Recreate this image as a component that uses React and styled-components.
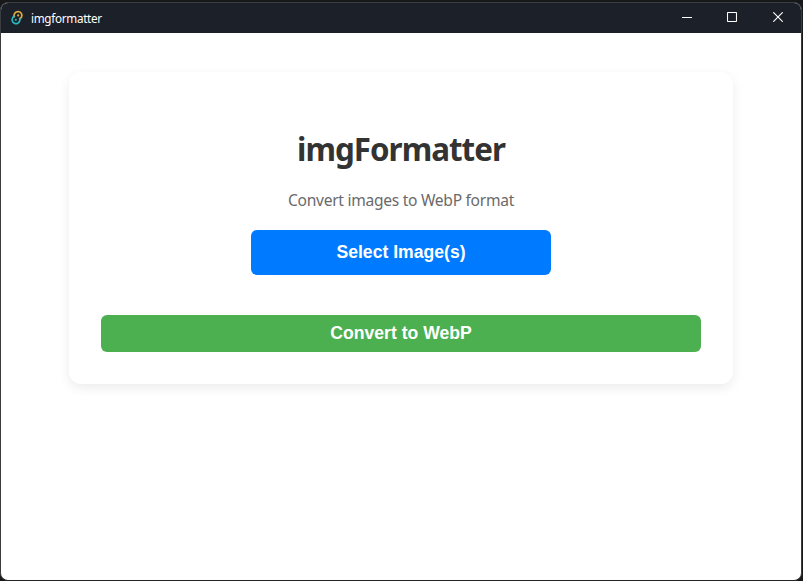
import React from "react";
import styled, { createGlobalStyle } from "styled-components";

const GlobalStyle = createGlobalStyle`
  * { box-sizing: border-box; }
  body { margin: 0; background: #161819; overflow: hidden; }
`;

const Desktop = styled.div`
  width: 803px;
  height: 581px;
  padding: 2px 1px 0 0;
  background: #161819;
`;

const Window = styled.div`
  display: flex;
  flex-direction: column;
  height: 579px;
  border: 1px solid #3a3d40;
  border-bottom-color: #222;
  border-radius: 8px;
  overflow: hidden;
  background: #fff;
`;

const TitleBar = styled.header`
  display: flex;
  align-items: center;
  flex: 0 0 30px;
  padding-left: 8px;
  background: #1c2029;
`;

const AppName = styled.span`
  flex: 1;
  margin-left: 6px;
  padding-bottom: 1px;
  color: #fff;
  font: 11.7px/16px "Noto Sans", "Open Sans", sans-serif;
  letter-spacing: -0.3px;
`;

const WindowButton = styled.button`
  display: flex;
  align-items: center;
  justify-content: center;
  width: ${({ $width }) => $width}px;
  height: 30px;
  padding: 0 0 2px;
  border: 0;
  background: transparent;
  color: #fff;
`;

const Content = styled.main`
  flex: 1;
  padding: 39px 68px 0;
`;

const Card = styled.section`
  display: flex;
  flex-direction: column;
  align-items: center;
  width: 664px;
  height: 312px;
  padding: 55px 32px 32px;
  border-radius: 12px;
  background: #fff;
  box-shadow: 0 4px 12px rgba(0, 0, 0, 0.08);
`;

const Heading = styled.h1`
  margin: 0;
  color: #333;
  font: 700 31.3px/44px "Noto Sans", "Open Sans", sans-serif;
  letter-spacing: -0.97px;
  white-space: nowrap;
`;

const Subtitle = styled.p`
  margin: 18px 0 19px;
  color: #6a6a6a;
  font: 400 15.6px/22px "Noto Sans", "Open Sans", sans-serif;
  letter-spacing: -0.29px;
  white-space: nowrap;
`;

const ActionButton = styled.button`
  flex: none;
  width: ${({ $wide }) => ($wide ? "600px" : "300px")};
  height: ${({ $wide }) => ($wide ? "37px" : "45px")};
  margin-top: ${({ $wide }) => ($wide ? "40px" : "0")};
  padding: 0 0 2px;
  border: 0;
  border-radius: 6px;
  background: ${({ $wide }) => ($wide ? "#4caf50" : "#007bff")};
  color: #fff;
  font: 700 17.6px/20px "Liberation Sans", Arial, sans-serif;
`;

function Logo() {
  return (
    <svg width="16" height="16" viewBox="0 0 16 16" fill="none">
      <path d="M5.6 7.4A3.9 3.9 0 1 1 10.4 9.1" stroke="#dfab3c" strokeWidth="1.7" />
      <path d="M10.4 7.8A3.9 3.9 0 1 1 5.6 6.1" stroke="#2bb5c0" strokeWidth="1.7" />
      <circle cx="9.2" cy="5.4" r="1.1" fill="#dfab3c" />
      <circle cx="6.8" cy="9.8" r="1.1" fill="#2bb5c0" />
    </svg>
  );
}

const windowControls = [
  { label: "Minimize", width: 44, glyph: <path d="M0 5.5H10" /> },
  { label: "Maximize", width: 46, glyph: <rect x="0.5" y="0.5" width="9" height="9" rx="0.6" /> },
  { label: "Close", width: 46, glyph: <path d="M0.3 0.3L9.7 9.7M9.7 0.3L0.3 9.7" /> },
];

export default function App() {
  return (
    <>
      <GlobalStyle />
      <Desktop>
        <Window>
          <TitleBar>
            <Logo />
            <AppName>imgformatter</AppName>
            {windowControls.map(({ label, width, glyph }) => (
              <WindowButton key={label} aria-label={label} $width={width}>
                <svg width="10" height="10" viewBox="0 0 10 10" fill="none" stroke="currentColor" strokeWidth="1.1">
                  {glyph}
                </svg>
              </WindowButton>
            ))}
          </TitleBar>
          <Content>
            <Card>
              <Heading>imgFormatter</Heading>
              <Subtitle>Convert images to WebP format</Subtitle>
              <ActionButton>Select Image(s)</ActionButton>
              <ActionButton $wide>Convert to WebP</ActionButton>
            </Card>
          </Content>
        </Window>
      </Desktop>
    </>
  );
}
